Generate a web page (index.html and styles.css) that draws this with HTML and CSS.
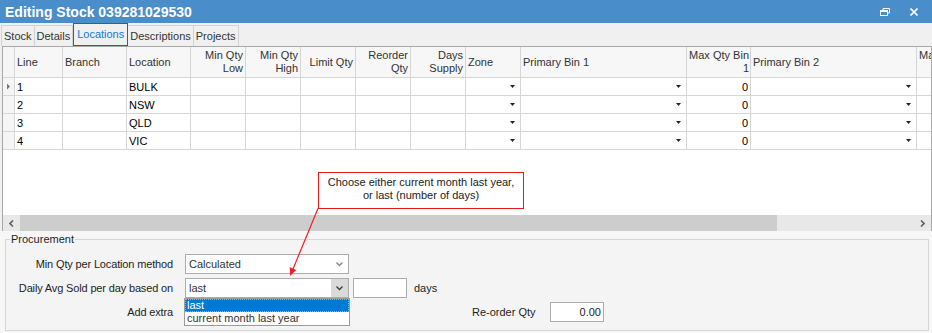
FILE: index.html
```html
<!DOCTYPE html>
<html>

<head>
    <meta charset="utf-8">
    <meta name="viewport" content="width=device-width">
    <title>Editing Stock</title>
    <link rel="stylesheet" href="styles.css">
</head>

<body>
    <div class="window">
        <div class="titlebar">
            <span class="title">Editing Stock 039281029530</span>
            <span class="tb-icons">
                <svg width="10" height="8" viewBox="0 0 10 8">
                    <path d="M3 2.5V0.5H9.5V5H7.5" fill="none" stroke="#fff" stroke-width="1"/>
                    <rect x="0.5" y="2.5" width="7" height="5" fill="none" stroke="#fff" stroke-width="1"/>
                    <rect x="0" y="2" width="8" height="2" fill="#fff"/>
                </svg>
                <svg width="8" height="8" viewBox="0 0 8 8">
                    <path d="M0.5 0.5L7.5 7.5M7.5 0.5L0.5 7.5" stroke="#fff" stroke-width="1.6"/>
                </svg>
            </span>
        </div>

        <ul class="tabs">
            <li class="tab">Stock</li>
            <li class="tab">Details</li>
            <li class="tab active">Locations</li>
            <li class="tab">Descriptions</li>
            <li class="tab">Projects</li>
        </ul>

        <div class="grid-box">
            <div class="grid">
                <div class="c h ind"></div>
                <div class="c h">Line</div>
                <div class="c h">Branch</div>
                <div class="c h">Location</div>
                <div class="c h r">Min Qty Low</div>
                <div class="c h r">Min Qty High</div>
                <div class="c h r">Limit Qty</div>
                <div class="c h r">Reorder Qty</div>
                <div class="c h r">Days Supply</div>
                <div class="c h">Zone</div>
                <div class="c h">Primary Bin 1</div>
                <div class="c h r tight">Max Qty Bin 1</div>
                <div class="c h">Primary Bin 2</div>
                <div class="c h r tight">Max Qty Bin 2</div>

                <div class="c ind cur"></div><div class="c">1</div><div class="c"></div><div class="c">BULK</div>
                <div class="c"></div><div class="c"></div><div class="c"></div><div class="c"></div><div class="c"></div>
                <div class="c dd"></div><div class="c dd"></div><div class="c r">0</div><div class="c dd"></div><div class="c"></div>

                <div class="c ind"></div><div class="c">2</div><div class="c"></div><div class="c">NSW</div>
                <div class="c"></div><div class="c"></div><div class="c"></div><div class="c"></div><div class="c"></div>
                <div class="c dd"></div><div class="c dd"></div><div class="c r">0</div><div class="c dd"></div><div class="c"></div>

                <div class="c ind"></div><div class="c">3</div><div class="c"></div><div class="c">QLD</div>
                <div class="c"></div><div class="c"></div><div class="c"></div><div class="c"></div><div class="c"></div>
                <div class="c dd"></div><div class="c dd"></div><div class="c r">0</div><div class="c dd"></div><div class="c"></div>

                <div class="c ind"></div><div class="c">4</div><div class="c"></div><div class="c">VIC</div>
                <div class="c"></div><div class="c"></div><div class="c"></div><div class="c"></div><div class="c"></div>
                <div class="c dd"></div><div class="c dd"></div><div class="c r">0</div><div class="c dd"></div><div class="c"></div>
            </div>

            <div class="hscroll">
                <span class="sb-btn">
                    <svg width="5" height="7" viewBox="0 0 5 7"><path d="M4 0.5L1 3.5L4 6.5" fill="none" stroke="#606060" stroke-width="1.6"/></svg>
                </span>
                <span class="sb-thumb"></span>
                <span class="sb-track"></span>
                <span class="sb-btn">
                    <svg width="5" height="7" viewBox="0 0 5 7"><path d="M1 0.5L4 3.5L1 6.5" fill="none" stroke="#606060" stroke-width="1.6"/></svg>
                </span>
            </div>
        </div>

        <div class="lower">
            <fieldset class="group">
                <legend>Procurement</legend>

                <div class="frow">
                    <span class="lbl">Min Qty per Location method</span>
                    <div class="combo">
                        Calculated
                        <svg class="chev" width="7" height="5" viewBox="0 0 7 5"><path d="M0.5 0.5L3.5 3.5L6.5 0.5" fill="none" stroke="#8a8a8a" stroke-width="1.4"/></svg>
                    </div>
                </div>

                <div class="frow">
                    <span class="lbl">Daily Avg Sold per day based on</span>
                    <div class="combo">
                        last
                        <span class="combo-btn">
                            <svg width="7" height="5" viewBox="0 0 7 5"><path d="M0.5 0.5L3.5 3.5L6.5 0.5" fill="none" stroke="#404040" stroke-width="1.4"/></svg>
                        </span>
                        <div class="droplist">
                            <div class="opt sel">last</div>
                            <div class="opt">current month last year</div>
                        </div>
                    </div>
                    <div class="tbox days-box"></div>
                    <span class="unit">days</span>
                </div>

                <div class="frow">
                    <span class="lbl">Add extra</span>
                    <div class="tbox extra-box"></div>
                    <span class="lbl2">Re-order Qty</span>
                    <div class="tbox num">0.00</div>
                </div>
            </fieldset>
        </div>

        <div class="callout">Choose either current month last year,<br>or last (number of days)</div>

        <svg class="arrow" width="932" height="333" viewBox="0 0 932 333">
            <line x1="318" y1="208.5" x2="293" y2="269" stroke="#f02020" stroke-width="1.2"/>
            <polygon points="290,276 296.3,269.9 289.8,267.3" fill="#f02020"/>
        </svg>
    </div>
</body>

</html>
```

FILE: styles.css
```css
body {
    margin: 0;
    font: 11px "Liberation Sans", Arial, sans-serif;
    color: #1e1e1e;
}

.window {
    position: relative;
    width: 932px;
    height: 333px;
    background: #f0f0f0;
    overflow: hidden;
}

/* title bar */
.titlebar {
    height: 23px;
    background: #4a8dcb;
    color: #fff;
    display: flex;
    align-items: center;
    padding-left: 5px;
}

.title {
    font-weight: bold;
    font-size: 14px;
}

.tb-icons {
    margin-left: auto;
    margin-right: 14px;
    display: flex;
    align-items: center;
    gap: 20px;
}

/* tabs */
.tabs {
    list-style: none;
    margin: 0;
    padding: 0 0 0 1px;
    height: 23px;
    display: flex;
    align-items: flex-end;
}

.tab {
    height: 21px;
    line-height: 20px;
    padding: 0 2px;
    box-sizing: border-box;
    border-top: 1px solid #d2d2d2;
    border-right: 1px solid #d2d2d2;
    color: #333;
}

.tab:first-child {
    border-left: 1px solid #d2d2d2;
}

.tab.active {
    height: 23px;
    line-height: 21px;
    padding: 0 3px;
    border: 1px solid #e51b1b;
    color: #1a78d2;
}

/* grid */
.grid-box {
    margin-left: 2px;
    height: 185px;
    box-sizing: border-box;
    border: 1px solid #a8a8a8;
    border-bottom: none;
    background: #fff;
    display: flex;
    flex-direction: column;
    overflow: hidden;
}

.grid {
    flex: 1;
    display: grid;
    grid-template-columns: 12px 48px 64px 64px 55px 55px 55px 55px 55px 55px 166px 64px 166px 64px;
    grid-template-rows: 31px repeat(4, 18px);
    align-content: start;
}

.c {
    box-sizing: border-box;
    border-right: 1px solid #d6d6d6;
    border-bottom: 1px solid #d6d6d6;
    padding: 0 2px;
    display: flex;
    align-items: center;
    white-space: nowrap;
    overflow: hidden;
    color: #000;
}

.h {
    background: #f7f7f7;
    color: #333;
    line-height: 13px;
    white-space: normal;
}

.r {
    justify-content: flex-end;
    text-align: right;
}

.h.tight {
    padding: 0 1px;
}

.ind {
    background: #f5f5f5;
    padding: 0;
}

.ind.cur::after {
    content: "";
    width: 3px;
    height: 6px;
    margin-left: 4px;
    background: #777;
    clip-path: polygon(0 0, 100% 50%, 0 100%);
}

.dd::after {
    content: "";
    width: 5px;
    height: 3px;
    margin-left: auto;
    margin-right: 3px;
    background: #222;
    clip-path: polygon(0 0, 100% 0, 50% 100%);
}

/* scroll bar */
.hscroll {
    height: 16px;
    display: flex;
    background: #e8e8e8;
}

.sb-btn {
    width: 17px;
    display: flex;
    align-items: center;
    justify-content: center;
}

.sb-thumb {
    width: 757px;
    background: #cdcdcd;
}

.sb-track {
    flex: 1;
}

/* procurement */
.lower {
    height: 102px;
    display: flex;
    flex-direction: column;
    background: #f7f7f7;
}

.group {
    flex: 1;
    min-width: 0;
    margin: 2px 3px 2px 5px;
    padding: 8px 0 0 0;
    border: 1px solid #d6d6d6;
    background: #f4f4f4;
}

.group legend {
    margin-left: 4px;
    padding: 0 1px;
    line-height: 13px;
    color: #1e1e1e;
}

.frow {
    display: flex;
    align-items: center;
    height: 20px;
    margin-bottom: 4px;
}

.lbl {
    width: 167px;
    margin-right: 12px;
    text-align: right;
    letter-spacing: -0.15px;
}

.combo {
    position: relative;
    width: 164px;
    height: 20px;
    box-sizing: border-box;
    border: 1px solid #acacac;
    background: #fff;
    display: flex;
    align-items: center;
    padding-left: 3px;
    color: #333;
}

.combo .chev {
    position: absolute;
    right: 5px;
    top: 7px;
}

.combo-btn {
    position: absolute;
    right: 0;
    top: 0;
    bottom: 0;
    width: 17px;
    background: #dadada;
    display: flex;
    align-items: center;
    justify-content: center;
}

.droplist {
    position: absolute;
    left: -2px;
    top: 19px;
    width: 166px;
    box-sizing: border-box;
    border: 1px solid #9c9c9c;
    background: #fff;
    z-index: 2;
}

.opt {
    height: 13px;
    line-height: 13px;
    padding-left: 2px;
    color: #333;
}

.opt.sel {
    background: #0078d7;
    color: #fff;
    outline: 1px dotted #f0a030;
    outline-offset: -1px;
}

.tbox {
    height: 20px;
    box-sizing: border-box;
    border: 1px solid #acacac;
    background: #fff;
}

.days-box {
    width: 54px;
    margin-left: 4px;
}

.unit {
    margin-left: 7px;
}

.extra-box {
    width: 164px;
}

.lbl2 {
    width: 78px;
    margin-left: 123px;
}

.tbox.num {
    width: 54px;
    text-align: right;
    padding-right: 2px;
    line-height: 18px;
    color: #222;
}

/* annotation */
.callout {
    position: absolute;
    left: 318px;
    top: 172px;
    width: 206px;
    height: 37px;
    box-sizing: border-box;
    border: 1px solid #e51b1b;
    background: #fff;
    text-align: center;
    padding-top: 3px;
    line-height: 13px;
    color: #222;
}

.arrow {
    position: absolute;
    left: 0;
    top: 0;
    pointer-events: none;
}
```
